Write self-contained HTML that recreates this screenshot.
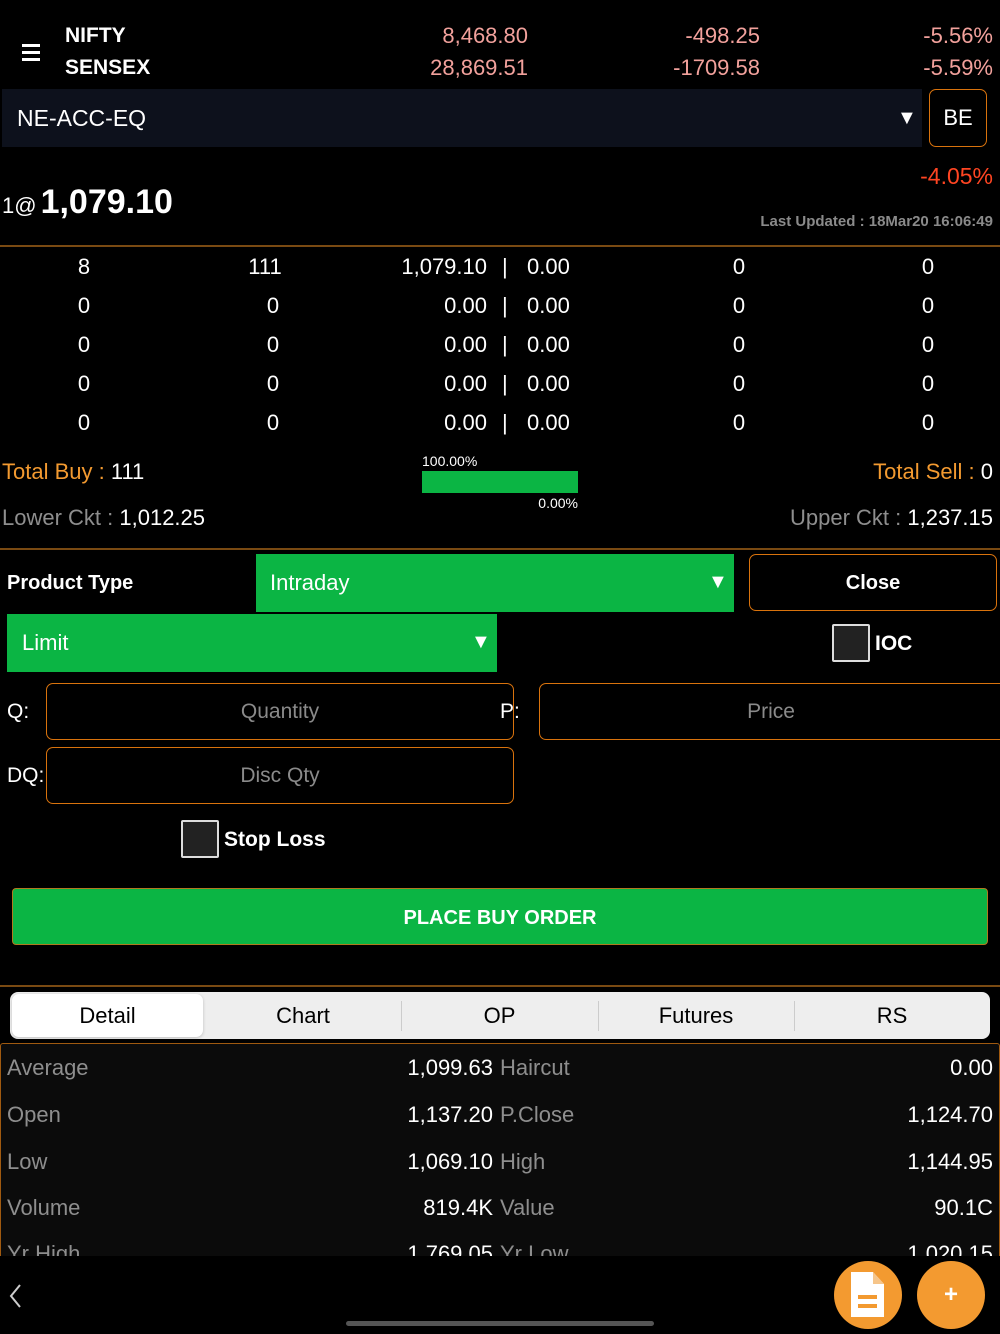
<!DOCTYPE html>
<html><head><meta charset="utf-8"><style>
*{margin:0;padding:0;box-sizing:border-box}
body{width:1000px;height:1334px;background:#000;position:relative;overflow:hidden;font-family:"Liberation Sans",sans-serif;color:#fff}
.a{position:absolute;white-space:nowrap}
.r{text-align:right}
.c{text-align:center}
.pk{color:#f2a19c;font-size:22px}
.g{color:#8e8e8e}
.o{color:#f39a30}
.row{font-size:22px;line-height:30px;height:30px}
.line{position:absolute;left:0;width:1000px;height:2px;background:#7a4a12}
.box{position:absolute;border:1.5px solid #d9730d;border-radius:7px}
.green{position:absolute;background:#0bb544}
.cb{position:absolute;width:38px;height:38px;border:2px solid #ddd;background:#222;border-radius:2px}
.tri{font-size:20px}
</style></head><body>

<div class="a" style="left:22px;top:44px;width:18px;height:3px;background:#fff"></div>
<div class="a" style="left:22px;top:51px;width:18px;height:3px;background:#fff"></div>
<div class="a" style="left:22px;top:58px;width:18px;height:3px;background:#fff"></div>
<div class="a" style="left:65px;top:24px;font-size:21px;font-weight:bold;line-height:24px">NIFTY</div>
<div class="a" style="left:65px;top:56px;font-size:21px;font-weight:bold;line-height:24px">SENSEX</div>
<div class="a r pk" style="right:472px;top:24px;line-height:24px">8,468.80</div>
<div class="a r pk" style="right:472px;top:56px;line-height:24px">28,869.51</div>
<div class="a r pk" style="right:240px;top:24px;line-height:24px">-498.25</div>
<div class="a r pk" style="right:240px;top:56px;line-height:24px">-1709.58</div>
<div class="a r pk" style="right:7px;top:24px;line-height:24px">-5.56%</div>
<div class="a r pk" style="right:7px;top:56px;line-height:24px">-5.59%</div>

<div class="a" style="left:2px;top:89px;width:920px;height:58px;background:#0d111c"></div>
<div class="a" style="left:17px;top:89px;line-height:58px;font-size:23px">NE-ACC-EQ</div>
<div class="a tri" style="left:897px;top:89px;line-height:58px">▼</div>
<div class="box" style="left:929px;top:89px;width:58px;height:58px;line-height:55px;text-align:center;font-size:22px">BE</div>

<div class="a r" style="right:7px;top:162px;font-size:23px;line-height:28px;color:#ff4522">-4.05%</div>
<div class="a" style="left:2px;top:184px;font-size:22px;line-height:36px">1@<span style="font-size:34px;font-weight:bold;margin-left:4px">1,079.10</span></div>
<div class="a r g" style="right:7px;top:213px;font-size:15px;line-height:18px;font-weight:bold;color:#8a8a8a">Last Updated : 18Mar20 16:06:49</div>
<div class="line" style="top:245px"></div>

<div class="a row c" style="left:44px;width:80px;top:252px">8</div>
<div class="a row c" style="left:225px;width:80px;top:252px">111</div>
<div class="a row r" style="right:513px;top:252px">1,079.10</div>
<div class="a row" style="left:502px;top:252px">|</div>
<div class="a row" style="left:527px;top:252px">0.00</div>
<div class="a row c" style="left:699px;width:80px;top:252px">0</div>
<div class="a row c" style="left:888px;width:80px;top:252px">0</div>

<div class="a row c" style="left:44px;width:80px;top:291px">0</div>
<div class="a row c" style="left:233px;width:80px;top:291px">0</div>
<div class="a row r" style="right:513px;top:291px">0.00</div>
<div class="a row" style="left:502px;top:291px">|</div>
<div class="a row" style="left:527px;top:291px">0.00</div>
<div class="a row c" style="left:699px;width:80px;top:291px">0</div>
<div class="a row c" style="left:888px;width:80px;top:291px">0</div>

<div class="a row c" style="left:44px;width:80px;top:330px">0</div>
<div class="a row c" style="left:233px;width:80px;top:330px">0</div>
<div class="a row r" style="right:513px;top:330px">0.00</div>
<div class="a row" style="left:502px;top:330px">|</div>
<div class="a row" style="left:527px;top:330px">0.00</div>
<div class="a row c" style="left:699px;width:80px;top:330px">0</div>
<div class="a row c" style="left:888px;width:80px;top:330px">0</div>

<div class="a row c" style="left:44px;width:80px;top:369px">0</div>
<div class="a row c" style="left:233px;width:80px;top:369px">0</div>
<div class="a row r" style="right:513px;top:369px">0.00</div>
<div class="a row" style="left:502px;top:369px">|</div>
<div class="a row" style="left:527px;top:369px">0.00</div>
<div class="a row c" style="left:699px;width:80px;top:369px">0</div>
<div class="a row c" style="left:888px;width:80px;top:369px">0</div>

<div class="a row c" style="left:44px;width:80px;top:408px">0</div>
<div class="a row c" style="left:233px;width:80px;top:408px">0</div>
<div class="a row r" style="right:513px;top:408px">0.00</div>
<div class="a row" style="left:502px;top:408px">|</div>
<div class="a row" style="left:527px;top:408px">0.00</div>
<div class="a row c" style="left:699px;width:80px;top:408px">0</div>
<div class="a row c" style="left:888px;width:80px;top:408px">0</div>

<div class="a row" style="left:2px;top:457px"><span class="o">Total Buy : </span>111</div>
<div class="a row r" style="right:7px;top:457px"><span class="o">Total Sell : </span>0</div>
<div class="a" style="left:422px;top:453px;font-size:14px;line-height:16px">100.00%</div>
<div class="green" style="left:422px;top:471px;width:156px;height:22px"></div>
<div class="a r" style="right:422px;top:495px;font-size:14px;line-height:16px">0.00%</div>
<div class="a row" style="left:2px;top:503px"><span class="g">Lower Ckt : </span>1,012.25</div>
<div class="a row r" style="right:7px;top:503px"><span class="g">Upper Ckt : </span>1,237.15</div>
<div class="line" style="top:548px"></div>

<div class="a" style="left:7px;top:569px;font-size:20px;font-weight:bold;line-height:28px">Product Type</div>
<div class="green" style="left:256px;top:554px;width:478px;height:58px"></div>
<div class="a" style="left:270px;top:554px;font-size:22px;line-height:58px">Intraday</div>
<div class="a tri" style="left:708px;top:554px;line-height:56px">▼</div>
<div class="box" style="left:749px;top:554px;width:248px;height:57px;line-height:57px;text-align:center;font-size:20px;font-weight:bold">Close</div>

<div class="green" style="left:7px;top:614px;width:490px;height:58px"></div>
<div class="a" style="left:22px;top:614px;font-size:22px;line-height:58px">Limit</div>
<div class="a tri" style="left:471px;top:614px;line-height:56px">▼</div>
<div class="cb" style="left:832px;top:624px"></div>
<div class="a" style="left:875px;top:630px;font-size:21px;font-weight:bold;line-height:28px">IOC</div>

<div class="a" style="left:7px;top:698px;font-size:21px;line-height:28px">Q:</div>
<div class="box" style="left:46px;top:683px;width:468px;height:57px;line-height:55px;text-align:center;font-size:21px;color:#8a8a8a">Quantity</div>
<div class="a" style="left:500px;top:698px;font-size:21px;line-height:28px">P:</div>
<div class="box" style="left:539px;top:683px;width:470px;height:57px;line-height:55px;text-align:center;font-size:21px;color:#8a8a8a;padding-right:6px">Price</div>
<div class="a" style="left:7px;top:762px;font-size:21px;line-height:28px">DQ:</div>
<div class="box" style="left:46px;top:747px;width:468px;height:57px;line-height:55px;text-align:center;font-size:21px;color:#8a8a8a">Disc Qty</div>

<div class="cb" style="left:181px;top:820px"></div>
<div class="a" style="left:224px;top:826px;font-size:21px;font-weight:bold;line-height:28px">Stop Loss</div>

<div class="green" style="left:12px;top:888px;width:976px;height:57px;border:1px solid #b07a20;border-radius:4px;line-height:58px;text-align:center;font-size:20px;font-weight:bold">PLACE BUY ORDER</div>
<div class="line" style="top:985px"></div>

<div class="a" style="left:10px;top:992px;width:980px;height:47px;background:#eeeeee;border-radius:8px"></div>
<div class="a" style="left:12px;top:994px;width:191px;height:43px;background:#fff;border-radius:7px;box-shadow:0 1px 3px rgba(0,0,0,.2)"></div>
<div class="a" style="left:401px;top:1001px;width:1px;height:30px;background:#ccc"></div>
<div class="a" style="left:598px;top:1001px;width:1px;height:30px;background:#ccc"></div>
<div class="a" style="left:794px;top:1001px;width:1px;height:30px;background:#ccc"></div>
<div class="a c" style="left:10px;width:195px;top:992px;line-height:47px;font-size:22px;color:#000">Detail</div>
<div class="a c" style="left:205px;width:196px;top:992px;line-height:47px;font-size:22px;color:#000">Chart</div>
<div class="a c" style="left:401px;width:197px;top:992px;line-height:47px;font-size:22px;color:#000">OP</div>
<div class="a c" style="left:598px;width:196px;top:992px;line-height:47px;font-size:22px;color:#000">Futures</div>
<div class="a c" style="left:794px;width:196px;top:992px;line-height:47px;font-size:22px;color:#000">RS</div>

<div class="a" style="left:0;top:1043px;width:1000px;height:240px;background:#0b0b0b;border:1.5px solid #a05a10;border-radius:3px"></div>
<div class="a row g" style="left:7px;top:1053px">Average</div>
<div class="a row r" style="right:507px;top:1053px">1,099.63</div>
<div class="a row g" style="left:500px;top:1053px">Haircut</div>
<div class="a row r" style="right:7px;top:1053px">0.00</div>
<div class="a row g" style="left:7px;top:1100px">Open</div>
<div class="a row r" style="right:507px;top:1100px">1,137.20</div>
<div class="a row g" style="left:500px;top:1100px">P.Close</div>
<div class="a row r" style="right:7px;top:1100px">1,124.70</div>
<div class="a row g" style="left:7px;top:1147px">Low</div>
<div class="a row r" style="right:507px;top:1147px">1,069.10</div>
<div class="a row g" style="left:500px;top:1147px">High</div>
<div class="a row r" style="right:7px;top:1147px">1,144.95</div>
<div class="a row g" style="left:7px;top:1193px">Volume</div>
<div class="a row r" style="right:507px;top:1193px">819.4K</div>
<div class="a row g" style="left:500px;top:1193px">Value</div>
<div class="a row r" style="right:7px;top:1193px">90.1C</div>
<div class="a row g" style="left:7px;top:1239px">Yr High</div>
<div class="a row r" style="right:507px;top:1239px">1,769.05</div>
<div class="a row g" style="left:500px;top:1239px">Yr Low</div>
<div class="a row r" style="right:7px;top:1239px">1,020.15</div>

<div class="a" style="left:0;top:1256px;width:1000px;height:78px;background:#000"></div>
<svg class="a" style="left:6px;top:1282px" width="20" height="28" viewBox="0 0 20 28"><path d="M14 3 L5 14 L14 25" stroke="#ccc" stroke-width="2" fill="none"/></svg>
<div class="a" style="left:834px;top:1261px;width:68px;height:68px;border-radius:50%;background:#f39a30"></div>
<svg class="a" style="left:846px;top:1269px" width="44" height="52" viewBox="0 0 44 52"><path d="M5 3 H27 L38 15 V48 H5 Z" fill="#fff"/><path d="M27 3 V15 H38" fill="#f6c58a"/><rect x="12" y="26" width="19" height="4" fill="#f39a30"/><rect x="12" y="35" width="19" height="4" fill="#f39a30"/></svg>
<div class="a" style="left:917px;top:1261px;width:68px;height:68px;border-radius:50%;background:#f39a30"></div>
<div class="a c" style="left:917px;top:1281px;width:68px;font-size:24px;font-weight:bold;line-height:28px">+</div>
<div class="a" style="left:346px;top:1321px;width:308px;height:5px;border-radius:3px;background:#555"></div>
</body></html>
